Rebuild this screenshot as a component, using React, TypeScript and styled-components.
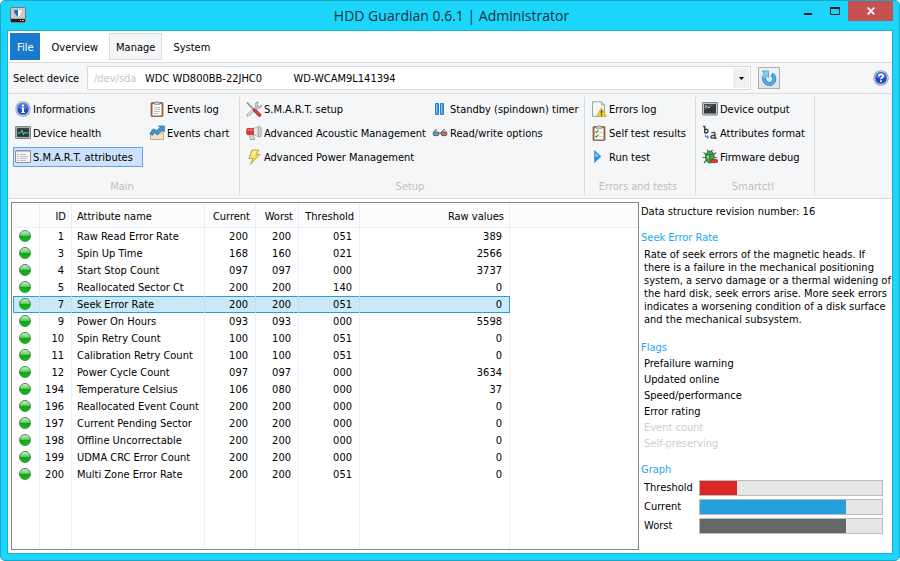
import React from "react";
import styled, { createGlobalStyle, css } from "styled-components";

const ui = `"DejaVu Sans Condensed", "Noto Sans", sans-serif`;

const GlobalStyle = createGlobalStyle`
  *, *::before, *::after { box-sizing: border-box; }
  body { margin: 0; background: #ffffff; }
  body, button, select { font-family: ${ui}; font-size: 11px; color: #000000; }
  button { margin: 0; padding: 0; border: 0; background: none; cursor: default; }
`;

/* ---------- window frame ---------- */

const Window = styled.main`
  display: flex;
  flex-direction: column;
  min-height: 100vh;
  padding: 0 6px 6px;
  background: #1bd6fa;
  border: 1px solid #1aa7c6;
  border-radius: 5px;
`;

const TitleBar = styled.header`
  display: grid;
  grid-template-columns: 1fr auto 1fr;
  align-items: start;
  height: 29px;
  padding-left: 3px;
`;

const AppIcon = styled.span`
  display: flex;
  padding-top: 6px;
`;

const Title = styled.h1`
  margin: 0;
  font-family: "Open Sans", "Noto Sans", sans-serif;
  font-size: 14px;
  font-weight: 400;
  line-height: 29px;
  color: #16323b;
`;

const WindowButtons = styled.div`
  display: flex;
  justify-content: flex-end;
`;

const WindowButton = styled.button<{ $close?: boolean }>`
  display: flex;
  width: ${(p) => (p.$close ? 45 : 27)}px;
  height: 20px;
  align-items: center;
  justify-content: center;
  ${(p) => p.$close && css`background: #c75050;`}
`;

const Client = styled.div`
  flex: 1;
  display: flex;
  flex-direction: column;
  border: 1px solid #17b2d0;
  background: #ffffff;
`;

/* ---------- tabs ---------- */

const TabBar = styled.nav`
  display: flex;
  gap: 2px;
  height: 32px;
  padding: 2px;
  border-bottom: 1px solid #dadbdc;
`;

const Tab = styled.button<{ $kind?: "file" | "active" }>`
  height: 27px;
  padding: 2px 6px 0;
  border: 1px solid transparent;
  ${(p) => p.$kind === "file" && css`background: #1979ca; color: #ffffff; margin-right: 2px;`}
  ${(p) => p.$kind === "active" && css`background: #f5f6f7; border-color: #dadbdc; margin: 0 2px;`}
`;

/* ---------- device row ---------- */

const DeviceBar = styled.div`
  display: flex;
  align-items: center;
  height: 31px;
  padding: 0 3px 0 5px;
  background: #f5f6f7;
  border-bottom: 1px solid #dadbdc;
`;

const DeviceLabel = styled.label`
  width: 74px;
`;

const DeviceField = styled.div`
  flex: 1;
  display: grid;
  grid-template-columns: 51px 1fr 16px;
  align-items: center;
  height: 24px;
  padding: 1px 1px 1px 6px;
  border: 1px solid #dadbdc;
  background: #ffffff;
`;

const DevicePath = styled.span`
  grid-area: 1 / 1;
  color: #c6c6c6;
`;

const DeviceSelect = styled.select`
  grid-area: 1 / 2 / 2 / 4;
  height: 20px;
  padding: 0;
  border: 0;
  outline: 0;
  background: transparent;
  appearance: none;
`;

const DropArrow = styled.span`
  grid-area: 1 / 3;
  display: flex;
  align-items: center;
  justify-content: center;
  height: 20px;
  background: #f0f0f0;
  pointer-events: none;
`;

const RefreshButton = styled.button`
  display: flex;
  align-items: center;
  justify-content: center;
  width: 22px;
  height: 22px;
  margin: 0 93px 0 7px;
  border: 1px solid #acacac;
  background: linear-gradient(#f0f0f0, #e2e2e2);
`;

const IconButton = styled.button`
  display: flex;
`;

/* ---------- ribbon ---------- */

const Ribbon = styled.div`
  display: flex;
  padding: 3px 0 3px 2px;
  background: #f5f6f7;
  border-bottom: 1px solid #dadbdc;
`;

const Group = styled.section<{ $width: number; $lead: number }>`
  display: flex;
  flex-direction: column;
  width: ${(p) => p.$width}px;
  padding-left: ${(p) => p.$lead}px;
  border-right: 1px solid #dadbdc;
`;

const Commands = styled.div<{ $first: number }>`
  display: grid;
  grid-template-columns: ${(p) => p.$first}px auto;
  grid-template-rows: repeat(3, 24px);
  grid-auto-flow: column;
  justify-content: start;
  align-items: center;
`;

const Command = styled.button<{ $selected?: boolean }>`
  display: flex;
  align-items: center;
  justify-self: start;
  gap: 2px;
  height: 20px;
  padding: 0 9px 0 1px;
  border: 1px solid ${(p) => (p.$selected ? "#62a2e4" : "transparent")};
  background: ${(p) => (p.$selected ? "#cde3fb" : "transparent")};
  white-space: nowrap;
`;

const CommandLabel = styled.span`
  padding-top: 1px;
`;

const GroupName = styled.h2`
  margin: 0;
  padding: 10px 8px 0 0;
  font-size: 11px;
  font-weight: 400;
  line-height: 16px;
  text-align: center;
  color: #c0c0c0;
`;

/* ---------- content ---------- */

const Content = styled.div`
  flex: 1;
  display: flex;
  padding: 3px 9px 3px 3px;
  gap: 2px;
`;

const TableBox = styled.div`
  flex: 1;
  display: flex;
  padding: 0 0 0 1px;
  border: 1px solid #828790;
`;

const Table = styled.table`
  width: 100%;
  border-collapse: separate;
  border-spacing: 0;
  table-layout: fixed;
`;

const Col = styled.col<{ $width?: number }>`
  ${(p) => p.$width && css`width: ${p.$width}px;`}
`;

type Align = "left" | "right";

const HeadCell = styled.th<{ $align?: Align }>`
  height: 25px;
  padding: 2px 5px 0;
  border-right: 1px solid #e5f0fb;
  border-bottom: 1px solid #e5f0fb;
  background: #fcfcfc;
  font-weight: 400;
  text-align: ${(p) => p.$align ?? "right"};
  &:last-child { border-right: 0; }
`;

const Row = styled.tr<{ $selected?: boolean }>`
  height: 17px;
  ${(p) =>
    p.$selected &&
    css`
      td:not(:last-child) {
        background: #cbe8f6;
        border-right-color: #b9dff1;
        box-shadow: inset 0 1px #26a0da, inset 0 -1px #26a0da;
      }
      td:first-child {
        box-shadow: inset 1px 1px #26a0da, inset 0 -1px #26a0da;
      }
      td:nth-last-child(2) { border-right-color: #26a0da; }
    `}
`;

const Cell = styled.td<{ $align?: Align }>`
  padding: 1px 7px 0 5px;
  border-right: 1px solid #e5f0fb;
  line-height: 16px;
  white-space: nowrap;
  text-align: ${(p) => p.$align ?? "right"};
  &:last-child { border-right: 0; }
`;

const StatusDot = styled.span`
  display: block;
  width: 12px;
  height: 12px;
  margin: 0 0 2px 1px;
  border: 1px solid #3f8f45;
  border-radius: 50%;
  background: linear-gradient(#d3f0d3 0%, #63c766 45%, #0aa614 50%, #17b821 100%);
`;

/* ---------- details ---------- */

const Details = styled.aside`
  width: 242px;
  padding-top: 2px;
  line-height: 16px;
`;

const Heading = styled.h3`
  margin: 0;
  font-size: 11px;
  font-weight: 400;
  line-height: 16px;
  color: #1ea6f5;
`;

const Block = styled.section`
  margin-top: 10px;
`;

const Description = styled.p`
  margin: 2px 0 14px;
  padding-left: 3px;
  line-height: 13px;
  white-space: pre;
`;

const FlagList = styled.ul`
  margin: 0;
  padding: 0 0 0 3px;
  list-style: none;
`;

const Flag = styled.li<{ $off?: boolean }>`
  color: ${(p) => (p.$off ? "#cdcdcd" : "#000000")};
`;

const GraphGrid = styled.div`
  display: grid;
  grid-template-columns: 55px 1fr;
  grid-auto-rows: 16px;
  gap: 3px 0;
  margin-top: 2px;
  padding-left: 3px;
`;

const Meter = styled.div`
  border: 1px solid #bcbcbc;
  background: #e6e6e6;
`;

const MeterFill = styled.div<{ $color: string }>`
  height: 100%;
  background: ${(p) => p.$color};
`;

/* ---------- icons ---------- */

const Svg = ({ children, size = 16 }: { children: React.ReactNode; size?: number }) => (
  <svg width={size} height={size} viewBox="0 0 16 16" aria-hidden="true">
    {children}
  </svg>
);

const DriveIcon = () => (
  <Svg>
    <rect x=".5" y=".5" width="15" height="15" rx="1.500" fill="#c9cbcd" stroke="#77797c" />
    <rect x="1" y="12" width="14" height="3" fill="#222" />
    <path d="M1 11.500h14" stroke="#a8a8a8" />
    <path d="M3.500 2.500Q6 3 8 2q2 1 4.500.5Q12.500 8 8 10.500 3.500 8 3.500 2.500Z" fill="#fff" stroke="#9aa4ae" strokeWidth=".6" />
    <path d="M4 3q2 .3 4-.6V9.800Q4.300 7.500 4 3Z" fill="#1768c4" />
    <path d="M10 13.500h1M12 13.500h2" stroke="#f6c22c" />
  </Svg>
);

const InfoIcon = () => (
  <Svg>
    <circle cx="8" cy="8" r="7.700" fill="#9ba1ad" />
    <circle cx="8" cy="8" r="6.300" fill="#1f4cc4" stroke="#dfe4f0" />
    <path d="M2.500 7.500a5.500 5.500 0 0 1 11 0Q8 9 2.500 7.500Z" fill="#4a74dc" />
    <path d="M7 3.500h2v2H7ZM6.500 6.500H9V11h.8v1H6.300v-1H7V7.500h-.5Z" fill="#fff" />
  </Svg>
);

const HelpIcon = () => (
  <Svg>
    <circle cx="8" cy="8" r="7.700" fill="#9b9ea6" />
    <circle cx="8" cy="8" r="6.300" fill="#1c46bd" stroke="#dfe4f0" />
    <path d="M2.500 7.500a5.500 5.500 0 0 1 11 0Q8 9 2.500 7.500Z" fill="#4770dc" />
    <path d="M5.800 6.200Q5.900 4.300 8 4.300t2.200 1.700q0 1-1.200 1.700T8 9.300" fill="none" stroke="#fff" strokeWidth="1.700" />
    <rect x="7.100" y="10.300" width="1.800" height="1.800" fill="#fff" />
  </Svg>
);

const HealthIcon = () => (
  <Svg>
    <rect x=".5" y="1.500" width="15" height="12" rx=".5" fill="#c9cccc" stroke="#858989" />
    <rect x="2" y="3" width="12" height="9" fill="#2d3a3b" stroke="#5c6464" strokeWidth=".6" />
    <path d="M2.500 8h3L7 5l1.500 5L9.500 7l1 1h3" fill="none" stroke="#5ccf9e" />
  </Svg>
);

const AttributesIcon = () => (
  <Svg>
    <rect x=".5" y="1.500" width="15" height="12" rx=".5" fill="#f7f7f7" stroke="#8f9193" />
    <path d="M1 2.500h14" stroke="#c3c5c7" />
    <path d="M2.500 5.500h1M2.500 7.500h1M2.500 9.500h1M2.500 11.500h1" stroke="#888" />
    <path d="M5 5.500h6M5 7.500h8M5 9.500h7M5 11.500h6" stroke="#bdbdbd" />
  </Svg>
);

const ClipBase = () => (
  <>
    <rect x="2" y="1.500" width="12" height="14" rx="1" fill="#a8694a" stroke="#80503a" strokeWidth=".7" />
    <rect x="3.500" y="3" width="9" height="11.500" fill="#fbfbfa" />
    <path d="M5 3.500V1.800h1.800L7.300.5h1.400l.5 1.300H11v1.700Z" fill="#c6c8c8" stroke="#888" strokeWidth=".6" />
  </>
);

const LogIcon = () => (
  <Svg>
    <ClipBase />
    <path d="M5 6.500h6M5 8.500h6M5 10.500h6M5 12.500h4" stroke="#b4c4c0" />
  </Svg>
);

const ResultsIcon = () => (
  <Svg>
    <ClipBase />
    <path d="m4.500 6.500 1 1 2-2.500m-3 6 1 1 2-2.500" fill="none" stroke="#2e9c36" strokeWidth="1.200" />
    <path d="M8.500 7.500h3M8.500 11.500h3" stroke="#999" strokeDasharray="1 1" />
  </Svg>
);

const ChartIcon = () => (
  <Svg>
    <path d="M1.500 8.500 3 5h11l.5 9.500h-13Z" fill="#e8cf9f" stroke="#b79c70" strokeWidth=".8" />
    <path d="M2 9.500h12v4.500H2Z" fill="#f2e2c2" />
    <path d="m.8 8.800 3.700-5 3 2.200L11 2.500 9.500 1h5.800v6L13.500 5 8.500 10 5.500 7.500 3.500 10.300Z" fill="#3c97da" stroke="#1b68a8" strokeWidth=".7" />
  </Svg>
);

const ToolsIcon = () => (
  <Svg>
    <path d="M2 14 11 6" stroke="#8b8f92" strokeWidth="3" strokeLinecap="round" />
    <path d="M2 14 11 6" stroke="#dcdfe1" strokeWidth="1.700" strokeLinecap="round" />
    <path d="M12.200.7Q9 1 9.500 5L12 7.500q3.500.3 3.700-3.300L13.500 5.500l-2-.2-.3-2.200Z" fill="#e3e6e8" stroke="#8b8f92" strokeWidth=".8" />
    <path d="m1 1.500 7 7.500" stroke="#8f9497" strokeWidth="1.800" />
    <path d="m8.800 9.300 4.700 4.700" stroke="#b52222" strokeWidth="3.400" strokeLinecap="round" />
    <path d="m9 9.300 4.300 4.300" stroke="#ef5b52" strokeWidth="1.400" strokeLinecap="round" />
  </Svg>
);

const MegaphoneIcon = () => (
  <Svg>
    <path d="M3 9h4l1.500 5.500h-4Z" fill="#d5d7d8" stroke="#8c8f91" strokeWidth=".8" />
    <path d="M7 3.500 13 1.500v10.500L7 9.500Z" fill="#e6e8e9" stroke="#a9acae" strokeWidth=".8" />
    <path d="M1 3.500h6.500v6H1Q0 6.500 1 3.500Z" fill="#d84040" stroke="#b02b2b" strokeWidth=".7" />
    <path d="M1.500 5h6" stroke="#f08b85" />
    <ellipse cx="13.600" cy="6.800" rx="1.600" ry="5.500" fill="#d3d6d8" stroke="#8f9395" strokeWidth=".8" />
  </Svg>
);

const BoltIcon = () => (
  <Svg>
    <path d="M6 1h7L10 5.500h4L4.500 15.300 7 9.500H3Z" fill="#f5df55" stroke="#b8a23a" strokeWidth=".9" strokeLinejoin="round" />
    <path d="M6.800 2h4L8 6.500 5 8.500Z" fill="#fbf2a8" />
  </Svg>
);

const PauseIcon = () => (
  <Svg>
    <path d="M3.500 2.500h3v11h-3ZM8.500 2.500h3v11h-3Z" fill="#3f9fe6" stroke="#2a7fc6" />
    <path d="M4.500 3.500v9M9.500 3.500v9" stroke="#7cc3f3" />
  </Svg>
);

const GlassesIcon = () => (
  <Svg>
    <path d="M1.500 7.500Q2 5 5 4.500M9 7.500Q9.800 5 13 4.500M6.500 8h3M14.500 8 14 6.500" fill="none" stroke="#5a5c60" />
    <ellipse cx="4" cy="8.800" rx="3" ry="2" fill="#6d9bed" stroke="#4a4d55" strokeWidth=".9" />
    <ellipse cx="12" cy="8.800" rx="3" ry="2" fill="#e0705e" stroke="#4a4d55" strokeWidth=".9" />
  </Svg>
);

const ErrorsIcon = () => (
  <Svg>
    <path d="M1.500.8h9l3 3v11.500h-12Z" fill="#f4f8f4" stroke="#8ba090" strokeWidth=".9" />
    <path d="M10.500.8v3h3" fill="#d6ded8" stroke="#8ba090" strokeWidth=".8" />
    <path d="M10.500 7 15.300 15.300H5.700Z" fill="#f6d231" stroke="#c9a52c" strokeWidth=".9" strokeLinejoin="round" />
    <path d="M10.500 9.500v3M10.500 13.300v1.200" stroke="#3b2e05" strokeWidth="1.200" />
  </Svg>
);

const RunIcon = () => (
  <Svg>
    <path d="M3.500 1.500v12L10 7.500Z" fill="#2d8fdb" stroke="#4a94cc" strokeWidth=".8" strokeLinejoin="round" />
    <path d="M4.300 3.500v4.500L8 7.500Z" fill="#8fcaf3" />
  </Svg>
);

const TerminalIcon = () => (
  <Svg>
    <rect x=".5" y="1.500" width="15" height="12.500" rx=".5" fill="#c6c8c8" stroke="#85888a" />
    <rect x="2" y="3" width="12" height="9.500" fill="#33363a" />
    <path d="M2.500 3.500h11L2.500 9Z" fill="#585c61" />
    <path d="m3 4.500 1.500 1L3 6.500M5.500 6.500H8" fill="none" stroke="#eee" strokeWidth=".8" />
  </Svg>
);

const FormatIcon = () => (
  <Svg>
    <path d="M1 1.500h1.700V8M2.700 5Q6 3.300 6 5.800T2.500 7.700" fill="none" stroke="#3d4043" strokeWidth="1.400" />
    <path d="M3.500 9.500v2.500H6M5 10.500 6.800 12 5 13.500" fill="none" stroke="#3b7bd2" />
    <path d="M9.300 7.800q3.700-1.300 3.700 1V13.300h1.500M13 10.200q-4-.2-4 1.700t4 .8" fill="none" stroke="#3d4043" strokeWidth="1.400" />
  </Svg>
);

const BugIcon = () => (
  <Svg>
    <path d="M5 .8 6.500 3M10.500.8 9 3M1.500 3.500 4.500 6M14 3.500 11 6M.5 8.500H4M15 8.500h-3.500M2 14 4.500 11M13 13l-2-1.500" stroke="#3b7a40" strokeWidth="1.200" />
    <ellipse cx="7.800" cy="8" rx="4.300" ry="6" fill="#48a04d" stroke="#2c7233" />
    <path d="M4.500 5.500h6.800M7.800 5.500v8" stroke="#2c7233" strokeWidth=".8" />
    <ellipse cx="6.200" cy="8" rx="1" ry="1.800" fill="#8cd08d" />
    <rect x="9" y="10.500" width="6.500" height="3" rx=".8" fill="#e23a2e" stroke="#a9190f" strokeWidth=".7" />
  </Svg>
);

const RefreshIcon = () => (
  <Svg>
    <path d="M10.500 4.500A5 5 0 1 1 3.500 7.500" fill="none" stroke="#2a80bd" strokeWidth="4" />
    <path d="M10.500 4.500A5 5 0 1 1 3.500 7.500" fill="none" stroke="#4caee8" strokeWidth="2.800" />
    <path d="M1 1h6.500v6.500L5.800 6 4 8.500 1 7.500 3 3.500Z" fill="#83cdf3" stroke="#4a9fd0" strokeWidth=".8" />
  </Svg>
);

/* ---------- data ---------- */

type CommandDef = { label: string; icon: () => React.ReactElement; selected?: boolean };

const groups: { name: string; width: number; lead: number; first: number; commands: CommandDef[] }[] = [
  {
    name: "Main",
    width: 230,
    lead: 3,
    first: 134,
    commands: [
      { label: "Informations", icon: InfoIcon },
      { label: "Device health", icon: HealthIcon },
      { label: "S.M.A.R.T. attributes", icon: AttributesIcon, selected: true },
      { label: "Events log", icon: LogIcon },
      { label: "Events chart", icon: ChartIcon },
    ],
  },
  {
    name: "Setup",
    width: 345,
    lead: 4,
    first: 186,
    commands: [
      { label: "S.M.A.R.T. setup", icon: ToolsIcon },
      { label: "Advanced Acoustic Management", icon: MegaphoneIcon },
      { label: "Advanced Power Management", icon: BoltIcon },
      { label: "Standby (spindown) timer", icon: PauseIcon },
      { label: "Read/write options", icon: GlassesIcon },
    ],
  },
  {
    name: "Errors and tests",
    width: 111,
    lead: 4,
    first: 100,
    commands: [
      { label: "Errors log", icon: ErrorsIcon },
      { label: "Self test results", icon: ResultsIcon },
      { label: "Run test", icon: RunIcon },
    ],
  },
  {
    name: "Smartctl",
    width: 119,
    lead: 4,
    first: 108,
    commands: [
      { label: "Device output", icon: TerminalIcon },
      { label: "Attributes format", icon: FormatIcon },
      { label: "Firmware debug", icon: BugIcon },
    ],
  },
];

const attributes: [string, string, string, string, string, string][] = [
  ["1", "Raw Read Error Rate", "200", "200", "051", "389"],
  ["3", "Spin Up Time", "168", "160", "021", "2566"],
  ["4", "Start Stop Count", "097", "097", "000", "3737"],
  ["5", "Reallocated Sector Ct", "200", "200", "140", "0"],
  ["7", "Seek Error Rate", "200", "200", "051", "0"],
  ["9", "Power On Hours", "093", "093", "000", "5598"],
  ["10", "Spin Retry Count", "100", "100", "051", "0"],
  ["11", "Calibration Retry Count", "100", "100", "051", "0"],
  ["12", "Power Cycle Count", "097", "097", "000", "3634"],
  ["194", "Temperature Celsius", "106", "080", "000", "37"],
  ["196", "Reallocated Event Count", "200", "200", "000", "0"],
  ["197", "Current Pending Sector", "200", "200", "000", "0"],
  ["198", "Offline Uncorrectable", "200", "200", "000", "0"],
  ["199", "UDMA CRC Error Count", "200", "200", "000", "0"],
  ["200", "Multi Zone Error Rate", "200", "200", "051", "0"],
];

const columnWidths = [27, 32, 133, 51, 43, 61, 150];

const description = `Rate of seek errors of the magnetic heads. If
there is a failure in the mechanical positioning
system, a servo damage or a thermal widening of
the hard disk, seek errors arise. More seek errors
indicates a worsening condition of a disk surface
and the mechanical subsystem.`;

const flags = [
  { label: "Prefailure warning", on: true },
  { label: "Updated online", on: true },
  { label: "Speed/performance", on: true },
  { label: "Error rating", on: true },
  { label: "Event count", on: false },
  { label: "Self-preserving", on: false },
];

const meters = [
  { label: "Threshold", value: 51, color: "#dc2626" },
  { label: "Current", value: 200, color: "#26a0dc" },
  { label: "Worst", value: 200, color: "#626868" },
];

const METER_MAX = 250;
const SELECTED_ID = "7";

/* ---------- page ---------- */

export default function App() {
  return (
    <>
      <GlobalStyle />
      <Window>
        <TitleBar>
          <AppIcon><DriveIcon /></AppIcon>
          <Title>HDD Guardian 0.6.1 | Administrator</Title>
          <WindowButtons>
            <WindowButton aria-label="Minimize">
              <svg width="8" height="10"><path d="M0 8h8" stroke="#222" strokeWidth="2" /></svg>
            </WindowButton>
            <WindowButton aria-label="Maximize">
              <svg width="10" height="8"><path d="M.5 1v6.500h9V1" fill="none" stroke="#222" /><path d="M0 1h10" stroke="#222" strokeWidth="2" /></svg>
            </WindowButton>
            <WindowButton $close aria-label="Close">
              <svg width="8" height="8"><path d="m.7.7 6.600 6.600M7.300.7.700 7.300" stroke="#fff" strokeWidth="1.800" /></svg>
            </WindowButton>
          </WindowButtons>
        </TitleBar>

        <Client>
          <TabBar>
            <Tab $kind="file">File</Tab>
            <Tab>Overview</Tab>
            <Tab $kind="active">Manage</Tab>
            <Tab>System</Tab>
          </TabBar>

          <DeviceBar>
            <DeviceLabel htmlFor="device">Select device</DeviceLabel>
            <DeviceField>
              <DevicePath>/dev/sda</DevicePath>
              <DeviceSelect id="device">
                <option>{`WDC WD800BB-22JHC0${"\u00a0".repeat(10)}WD-WCAM9L141394`}</option>
              </DeviceSelect>
              <DropArrow>
                <svg width="5" height="3"><path d="M0 0h5L2.500 3Z" fill="#000" /></svg>
              </DropArrow>
            </DeviceField>
            <RefreshButton aria-label="Refresh"><RefreshIcon /></RefreshButton>
            <IconButton aria-label="Help"><HelpIcon /></IconButton>
          </DeviceBar>

          <Ribbon>
            {groups.map((g) => (
              <Group key={g.name} $width={g.width} $lead={g.lead}>
                <Commands $first={g.first}>
                  {g.commands.map(({ label, icon: Icon, selected }) => (
                    <Command key={label} $selected={selected} aria-pressed={selected}>
                      <Icon />
                      <CommandLabel>{label}</CommandLabel>
                    </Command>
                  ))}
                </Commands>
                <GroupName>{g.name}</GroupName>
              </Group>
            ))}
          </Ribbon>

          <Content>
            <TableBox>
              <Table>
                <colgroup>
                  {columnWidths.map((w, i) => <Col key={i} $width={w} />)}
                  <Col />
                </colgroup>
                <thead>
                  <tr>
                    <HeadCell aria-label="Status" />
                    <HeadCell>ID</HeadCell>
                    <HeadCell $align="left">Attribute name</HeadCell>
                    <HeadCell>Current</HeadCell>
                    <HeadCell>Worst</HeadCell>
                    <HeadCell>Threshold</HeadCell>
                    <HeadCell>Raw values</HeadCell>
                    <HeadCell />
                  </tr>
                </thead>
                <tbody>
                  {attributes.map(([id, name, ...values]) => (
                    <Row key={id} $selected={id === SELECTED_ID}>
                      <Cell><StatusDot /></Cell>
                      <Cell>{id}</Cell>
                      <Cell $align="left">{name}</Cell>
                      {values.map((v, i) => <Cell key={i}>{v}</Cell>)}
                      <Cell />
                    </Row>
                  ))}
                  <tr>
                    {[...columnWidths, 0].map((_, i) => <Cell key={i} />)}
                  </tr>
                </tbody>
              </Table>
            </TableBox>

            <Details>
              <div>Data structure revision number: 16</div>
              <Block>
                <Heading>Seek Error Rate</Heading>
                <Description>{description}</Description>
              </Block>
              <Heading>Flags</Heading>
              <FlagList>
                {flags.map((f) => <Flag key={f.label} $off={!f.on}>{f.label}</Flag>)}
              </FlagList>
              <Block>
                <Heading>Graph</Heading>
                <GraphGrid>
                  {meters.map((m) => (
                    <React.Fragment key={m.label}>
                      <span id={`meter-${m.label}`}>{m.label}</span>
                      <Meter role="meter" aria-labelledby={`meter-${m.label}`} aria-valuenow={m.value} aria-valuemin={0} aria-valuemax={METER_MAX}>
                        <MeterFill $color={m.color} style={{ width: `${(m.value / METER_MAX) * 100}%` }} />
                      </Meter>
                    </React.Fragment>
                  ))}
                </GraphGrid>
              </Block>
            </Details>
          </Content>
        </Client>
      </Window>
    </>
  );
}
